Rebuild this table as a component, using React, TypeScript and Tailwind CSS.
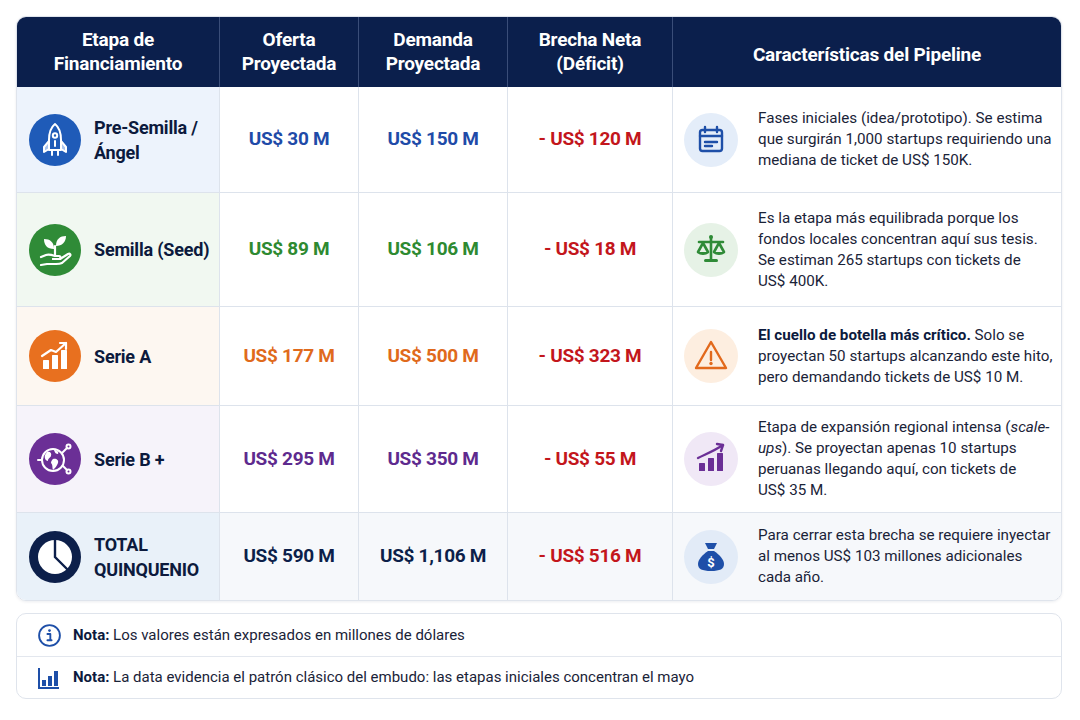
import React from "react";

const Rocket = () => (
  <svg viewBox="0 0 52 52" className="w-[52px] h-[52px]">
    <circle cx="26" cy="26" r="26" fill="#1f5bb8" />
    <g fill="none" stroke="#fff" strokeWidth="2" strokeLinejoin="round" strokeLinecap="round">
      <path d="M20 27 L15 33 L15 38 L20 35" fill="#a9c4ee" />
      <path d="M32 27 L37 33 L37 38 L32 35" fill="#a9c4ee" />
      <path d="M26 10 C21 14 20 20 20 26 L20 36 L32 36 L32 26 C32 20 31 14 26 10 Z" />
      <circle cx="26" cy="21.5" r="2.2" />
      <path d="M26 27 L26 32" />
      <path d="M23 36 L23 41 M29 36 L29 41" />
    </g>
  </svg>
);

const Seed = () => (
  <svg viewBox="0 0 52 52" className="w-[52px] h-[52px]">
    <circle cx="26" cy="26" r="26" fill="#2f8b37" />
    <g fill="#fff">
      <path d="M25 25 C18 25 15 21 15 15 C21 15 25 18 25 25 Z" />
      <path d="M27 22 C27 15 31 12 37 12 C37 18 33 22 27 22 Z" />
    </g>
    <g fill="none" stroke="#fff" strokeWidth="2.2" strokeLinecap="round" strokeLinejoin="round">
      <path d="M26 22 L26 31" />
      <path d="M12 33 L17 31 C20 30 23 31 26 32 L30 32 C32 32 32 35 30 35 L24 35" />
      <path d="M24 35 L31 35 L39 30 C41 29 42 31 41 32 L33 39 C31 40 29 40 27 40 L18 40 L12 41" />
    </g>
  </svg>
);

const ChartUp = () => (
  <svg viewBox="0 0 52 52" className="w-[52px] h-[52px]">
    <circle cx="26" cy="26" r="26" fill="#e8701f" />
    <g fill="#fff">
      <rect x="14" y="30" width="6" height="9" rx="0.5" />
      <rect x="23" y="25" width="6" height="14" rx="0.5" />
      <rect x="32" y="20" width="6" height="19" rx="0.5" />
    </g>
    <g fill="none" stroke="#fff" strokeWidth="2.2" strokeLinecap="round" strokeLinejoin="round">
      <path d="M13 26 L22 20 L27 22 L37 13" />
      <path d="M31 13 L37 13 L37 19" />
    </g>
  </svg>
);

const Globe = () => (
  <svg viewBox="0 0 52 52" className="w-[52px] h-[52px]">
    <circle cx="26" cy="26" r="26" fill="#6b2f96" />
    <g fill="none" stroke="#fff" strokeWidth="2" strokeLinecap="round">
      <circle cx="24" cy="27" r="11" />
      <path d="M33 20 L38 15" />
      <circle cx="39.5" cy="13.5" r="2" />
      <path d="M34 33 L38 37" />
      <circle cx="39.5" cy="38.5" r="2" />
      <path d="M13 27 L9 27" />
    </g>
    <g fill="#fff">
      <path d="M18 19 C21 18 23 20 22 23 C21 25 19 25 19 28 C17 28 15 25 16 22 Z" />
      <path d="M25 17 C28 17 30 19 29 21 C27 21 26 20 25 17 Z" />
      <path d="M24 26 C27 25 30 27 29 30 C28 33 26 35 24 37 C23 34 24 32 22 30 C22 28 23 27 24 26 Z" />
    </g>
  </svg>
);

const Pie = () => (
  <svg viewBox="0 0 52 52" className="w-[52px] h-[52px]">
    <circle cx="26" cy="26" r="26" fill="#0c1f4a" />
    <circle cx="26" cy="26" r="17" fill="#fff" />
    <g fill="none" stroke="#0c1f4a" strokeWidth="2.4" strokeLinecap="round">
      <path d="M26 9 L26 26 L38 38" />
    </g>
  </svg>
);

const Calendar = () => (
  <svg viewBox="0 0 54 54" className="w-[54px] h-[54px]">
    <circle cx="27" cy="27" r="27" fill="#e4edf9" />
    <g fill="none" stroke="#1e4fa8" strokeWidth="2.4" strokeLinecap="round" strokeLinejoin="round">
      <rect x="16" y="17" width="22" height="21" rx="2.5" />
      <path d="M16 23 L38 23" />
      <path d="M21 14 L21 19 M33 14 L33 19" />
      <path d="M21 29 L33 29 M21 33 L28 33" />
    </g>
  </svg>
);

const Scale = () => (
  <svg viewBox="0 0 54 54" className="w-[54px] h-[54px]">
    <circle cx="27" cy="27" r="27" fill="#e6f2e6" />
    <g fill="none" stroke="#2f8b37" strokeWidth="2.6" strokeLinecap="round" strokeLinejoin="round">
      <path d="M27 14 L27 37" />
      <path d="M15 19 L39 19" />
      <path d="M19 20 L14 29 M19 20 L24 29" />
      <path d="M35 20 L30 29 M35 20 L40 29" />
    </g>
    <g fill="#2f8b37">
      <path d="M13 29 L25 29 C24 33 14 33 13 29 Z" />
      <path d="M29 29 L41 29 C40 33 30 33 29 29 Z" />
      <rect x="20" y="36" width="14" height="3" rx="1.5" />
      <circle cx="27" cy="14" r="2" />
    </g>
  </svg>
);

const Warning = () => (
  <svg viewBox="0 0 54 54" className="w-[54px] h-[54px]">
    <circle cx="27" cy="27" r="27" fill="#fdeee0" />
    <g fill="none" stroke="#e2691c" strokeWidth="2.4" strokeLinecap="round" strokeLinejoin="round">
      <path d="M27 13 L42 39 L12 39 Z" />
      <path d="M27 23 L27 31" />
    </g>
    <circle cx="27" cy="34.5" r="1.7" fill="#e2691c" />
  </svg>
);

const Growth = () => (
  <svg viewBox="0 0 54 54" className="w-[54px] h-[54px]">
    <circle cx="27" cy="27" r="27" fill="#f0e8f6" />
    <g fill="#6b2f96">
      <rect x="15" y="31" width="6" height="8" rx="0.5" />
      <rect x="24" y="26" width="6" height="13" rx="0.5" />
      <rect x="33" y="21" width="6" height="18" rx="0.5" />
    </g>
    <g fill="none" stroke="#6b2f96" strokeWidth="2.4" strokeLinecap="round" strokeLinejoin="round">
      <path d="M14 26 C22 22 30 19 39 13" />
      <path d="M33 12 L39 13 L37 19" />
    </g>
  </svg>
);

const Bag = () => (
  <svg viewBox="0 0 54 54" className="w-[54px] h-[54px]">
    <circle cx="27" cy="27" r="27" fill="#e2ebf7" />
    <path d="M21 13 L33 13 L30 19 L24 19 Z" fill="#1e4fa8" />
    <path d="M24 21 L30 21 C36 25 40 30 40 34 C40 39 36 41 27 41 C18 41 14 39 14 34 C14 30 18 25 24 21 Z" fill="#1e4fa8" />
    <text x="27" y="37" textAnchor="middle" fill="#fff" fontSize="13" fontWeight="700" fontFamily="Roboto, sans-serif">$</text>
  </svg>
);

const InfoIcon = () => (
  <svg viewBox="0 0 24 24" className="w-[25px] h-[25px]">
    <circle cx="12" cy="12" r="10" fill="none" stroke="#1e4fa8" strokeWidth="1.8" />
    <circle cx="12" cy="7.3" r="1.3" fill="#1e4fa8" />
    <path d="M10 10.5 L12.8 10.5 L12.8 16.5 L14 16.5 M10 16.5 L14 16.5" fill="none" stroke="#1e4fa8" strokeWidth="1.8" strokeLinecap="round" strokeLinejoin="round" />
  </svg>
);

const BarsIcon = () => (
  <svg viewBox="0 0 24 24" className="w-[24px] h-[24px]">
    <path d="M2 2 L2 22 L22 22" fill="none" stroke="#1e4fa8" strokeWidth="2" />
    <rect x="5" y="14" width="4" height="6" fill="#1e4fa8" />
    <rect x="11" y="10" width="4" height="10" fill="#1e4fa8" />
    <rect x="17" y="5" width="4" height="15" fill="#1e4fa8" />
  </svg>
);

type Row = {
  icon: React.ReactNode;
  name: React.ReactNode;
  nameBg: string;
  rowBg: string;
  oferta: string;
  demanda: string;
  brecha: string;
  color: string;
  pIcon: React.ReactNode;
  lines: React.ReactNode[];
  h: string;
};

const B = ({ children }: { children: React.ReactNode }) => (
  <span className="font-bold text-[#0c1a3d]">{children}</span>
);

const rows: Row[] = [
  {
    icon: <Rocket />,
    name: <>Pre-Semilla /<br />Ángel</>,
    nameBg: "bg-[#edf3fc]",
    rowBg: "bg-white",
    oferta: "US$ 30 M",
    demanda: "US$ 150 M",
    brecha: "- US$ 120 M",
    color: "text-[#1f4ba8]",
    pIcon: <Calendar />,
    lines: [
      "Fases iniciales (idea/prototipo). Se estima",
      "que surgirán 1,000 startups requiriendo una",
      "mediana de ticket de US$ 150K.",
    ],
    h: "h-[105px]",
  },
  {
    icon: <Seed />,
    name: <>Semilla (Seed)</>,
    nameBg: "bg-[#f1f8f1]",
    rowBg: "bg-white",
    oferta: "US$ 89 M",
    demanda: "US$ 106 M",
    brecha: "- US$ 18 M",
    color: "text-[#2e8a31]",
    pIcon: <Scale />,
    lines: [
      "Es la etapa más equilibrada porque los",
      "fondos locales concentran aquí sus tesis.",
      "Se estiman 265 startups con tickets de",
      "US$ 400K.",
    ],
    h: "h-[114px]",
  },
  {
    icon: <ChartUp />,
    name: <>Serie A</>,
    nameBg: "bg-[#fdf7f1]",
    rowBg: "bg-white",
    oferta: "US$ 177 M",
    demanda: "US$ 500 M",
    brecha: "- US$ 323 M",
    color: "text-[#e06a1c]",
    pIcon: <Warning />,
    lines: [
      <><B>El cuello de botella más crítico.</B> Solo se</>,
      "proyectan 50 startups alcanzando este hito,",
      "pero demandando tickets de US$ 10 M.",
    ],
    h: "h-[99px]",
  },
  {
    icon: <Globe />,
    name: <>Serie B +</>,
    nameBg: "bg-[#f6f3fa]",
    rowBg: "bg-white",
    oferta: "US$ 295 M",
    demanda: "US$ 350 M",
    brecha: "- US$ 55 M",
    color: "text-[#5e2a8e]",
    pIcon: <Growth />,
    lines: [
      <>Etapa de expansión regional intensa (<span className="italic">scale-</span></>,
      <><span className="italic">ups</span>). Se proyectan apenas 10 startups</>,
      "peruanas llegando aquí, con tickets de",
      "US$ 35 M.",
    ],
    h: "h-[107px]",
  },
  {
    icon: <Pie />,
    name: <>TOTAL<br />QUINQUENIO</>,
    nameBg: "bg-[#e9f1f9]",
    rowBg: "bg-[#f6f8fb]",
    oferta: "US$ 590 M",
    demanda: "US$ 1,106 M",
    brecha: "- US$ 516 M",
    color: "text-[#0c1f4a]",
    pIcon: <Bag />,
    lines: [
      "Para cerrar esta brecha se requiere inyectar",
      "al menos US$ 103 millones adicionales",
      "cada año.",
    ],
    h: "h-[88px]",
  },
];

export default function App() {
  return (
    <div
      className="w-[1080px] h-[720px] bg-white px-[16px] pt-[16px] text-[#0c1a3d]"
      style={{ fontFamily: "Roboto, 'Liberation Sans', sans-serif" }}
    >
      <div className="w-[1046px] rounded-[10px] border border-[#dfe4ec] overflow-hidden shadow-[0_1px_3px_rgba(15,30,70,0.08)]">
        <div className="grid grid-cols-[203px_139px_149px_165px_1fr] h-[70px] bg-[#0b1f4c] text-white font-bold text-[19px] leading-[24px] tracking-[-0.2px]">
          <div className="flex items-center justify-center text-center border-r border-[#3a4d78]">Etapa de<br />Financiamiento</div>
          <div className="flex items-center justify-center text-center border-r border-[#3a4d78]">Oferta<br />Proyectada</div>
          <div className="flex items-center justify-center text-center border-r border-[#3a4d78]">Demanda<br />Proyectada</div>
          <div className="flex items-center justify-center text-center border-r border-[#3a4d78]">Brecha Neta<br />(Déficit)</div>
          <div className="flex items-center justify-center text-center pt-[6px]">Características del Pipeline</div>
        </div>
        {rows.map((r, i) => (
          <div
            key={i}
            className={`grid grid-cols-[203px_139px_149px_165px_1fr] ${r.h} ${r.rowBg} ${i > 0 ? "border-t border-[#dde3ec]" : ""}`}
          >
            <div className={`flex items-center gap-[13px] pl-[12px] border-r border-[#dde3ec] ${r.nameBg}`}>
              <div className="shrink-0">{r.icon}</div>
              <div className="font-bold text-[18px] leading-[25px] text-[#0c1a3d] tracking-[-0.2px]">{r.name}</div>
            </div>
            <div className={`flex items-center justify-center font-bold text-[19px] tracking-[-0.3px] border-r border-[#dde3ec] ${r.color}`}>{r.oferta}</div>
            <div className={`flex items-center justify-center font-bold text-[19px] tracking-[-0.3px] border-r border-[#dde3ec] ${r.color}`}>{r.demanda}</div>
            <div className="flex items-center justify-center font-bold text-[19px] tracking-[-0.3px] border-r border-[#dde3ec] text-[#c3161c]">{r.brecha}</div>
            <div className="flex items-center pl-[11px] pr-[6px] gap-[20px]">
              <div className="shrink-0">{r.pIcon}</div>
              <div className="flex flex-col text-[15.2px] leading-[21px] text-[#1a2338] whitespace-nowrap">
                {r.lines.map((l, j) => (
                  <div key={j}>{l}</div>
                ))}
              </div>
            </div>
          </div>
        ))}
      </div>
      <div className="mt-[12px] w-[1046px] rounded-[10px] border border-[#dfe4ec] overflow-hidden text-[15px] text-[#1a2338]">
        <div className="flex items-center h-[42px] pl-[20px] gap-[11px]">
          <InfoIcon />
          <div><span className="font-bold text-[#0c1a3d]">Nota:</span> Los valores están expresados en millones de dólares</div>
        </div>
        <div className="flex items-center h-[42px] pl-[20px] gap-[12px] border-t border-[#e3e7ee]">
          <BarsIcon />
          <div><span className="font-bold text-[#0c1a3d]">Nota:</span> La data evidencia el patrón clásico del embudo: las etapas iniciales concentran el mayo</div>
        </div>
      </div>
    </div>
  );
}
